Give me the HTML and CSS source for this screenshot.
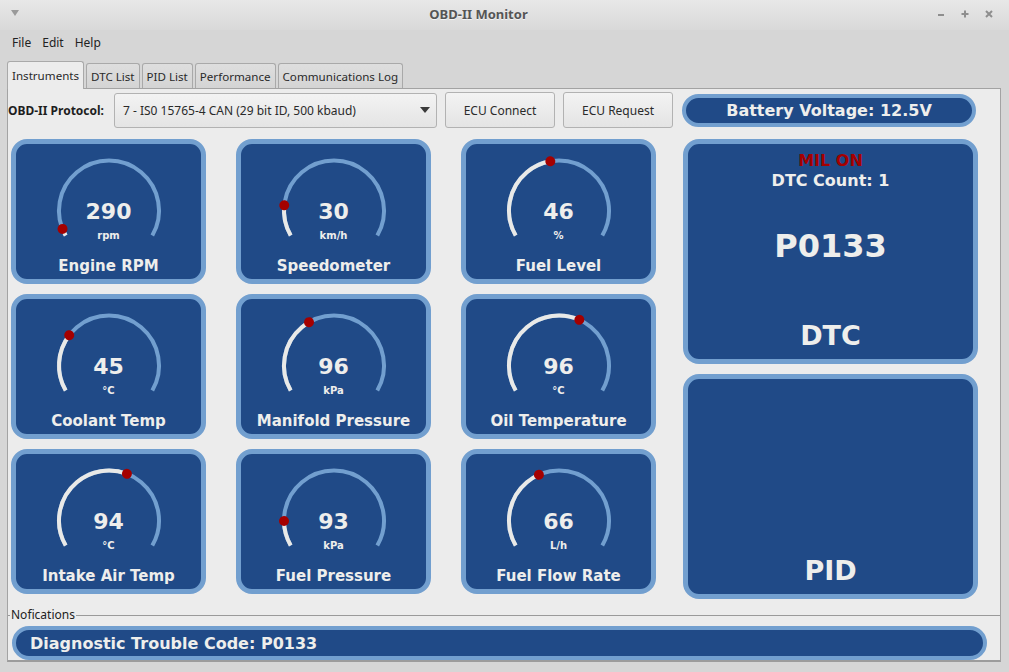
FILE: index.html
```html
<!DOCTYPE html>
<html>
<head>
<meta charset="utf-8">
<title>OBD-II Monitor</title>
<link rel="stylesheet" href="styles.css">
</head>
<body>
<div class="window">
  <header class="titlebar">
    <div class="tb-left">
      <svg width="8" height="6" viewBox="0 0 8 6"><polygon points="0,0 8,0 4,6" class="tb-glyph-fill"/></svg>
    </div>
    <div class="tb-title">OBD-II Monitor</div>
    <div class="tb-right">
      <span class="tb-btn"><svg width="8" height="8" viewBox="0 0 8 8"><path d="M1 5h6" class="tb-glyph"/></svg></span>
      <span class="tb-btn"><svg width="8" height="8" viewBox="0 0 8 8"><path d="M0.5 4h7M4 0.5v7" class="tb-glyph"/></svg></span>
      <span class="tb-btn"><svg width="8" height="8" viewBox="0 0 8 8"><path d="M1 1l6 6M7 1l-6 6" class="tb-glyph"/></svg></span>
    </div>
  </header>

  <nav class="menubar">
    <span class="menu-item">File</span>
    <span class="menu-item">Edit</span>
    <span class="menu-item">Help</span>
  </nav>

  <div class="tabs">
    <div class="tab active">Instruments</div>
    <div class="tab">DTC List</div>
    <div class="tab">PID List</div>
    <div class="tab">Performance</div>
    <div class="tab">Communications Log</div>
  </div>

  <main class="pane">
    <div class="toolbar">
      <label class="proto-label">OBD-II Protocol:</label>
      <div class="combo">
        <span class="combo-text">7 - IS0 15765-4 CAN (29 bit ID, 500 kbaud)</span>
        <svg class="combo-arrow" width="10" height="6" viewBox="0 0 10 6"><polygon points="0,0 10,0 5,6"/></svg>
      </div>
      <button class="btn">ECU Connect</button>
      <button class="btn">ECU Request</button>
      <div class="pill battery">Battery Voltage: 12.5V</div>
    </div>

    <div class="dashboard">
      <div class="gauges">
        <div class="card gauge">
          <div class="dial">
            <svg class="dial-svg" width="110" height="90" viewBox="0 0 110 90">
              <path class="arc-bg" d="M11.70 83.5 A50 50 0 1 1 98.30 83.5"/>
              <path class="arc-val" d="M11.70 83.5 A50 50 0 1 1 98.30 83.5" pathLength="240" stroke-dasharray="8.4 300"/>
              <circle class="needle" cx="55" cy="8.5" r="5" transform="rotate(-111.6 55 58.5)"/>
            </svg>
            <div class="value">290</div>
            <div class="unit">rpm</div>
          </div>
          <div class="gauge-label">Engine RPM</div>
        </div>

        <div class="card gauge">
          <div class="dial">
            <svg class="dial-svg" width="110" height="90" viewBox="0 0 110 90">
              <path class="arc-bg" d="M11.70 83.5 A50 50 0 1 1 98.30 83.5"/>
              <path class="arc-val" d="M11.70 83.5 A50 50 0 1 1 98.30 83.5" pathLength="240" stroke-dasharray="36 300"/>
              <circle class="needle" cx="55" cy="8.5" r="5" transform="rotate(-84 55 58.5)"/>
            </svg>
            <div class="value">30</div>
            <div class="unit">km/h</div>
          </div>
          <div class="gauge-label">Speedometer</div>
        </div>

        <div class="card gauge">
          <div class="dial">
            <svg class="dial-svg" width="110" height="90" viewBox="0 0 110 90">
              <path class="arc-bg" d="M11.70 83.5 A50 50 0 1 1 98.30 83.5"/>
              <path class="arc-val" d="M11.70 83.5 A50 50 0 1 1 98.30 83.5" pathLength="240" stroke-dasharray="110 300"/>
              <circle class="needle" cx="55" cy="8.5" r="5" transform="rotate(-10 55 58.5)"/>
            </svg>
            <div class="value">46</div>
            <div class="unit">%</div>
          </div>
          <div class="gauge-label">Fuel Level</div>
        </div>

        <div class="card gauge">
          <div class="dial">
            <svg class="dial-svg" width="110" height="90" viewBox="0 0 110 90">
              <path class="arc-bg" d="M11.70 83.5 A50 50 0 1 1 98.30 83.5"/>
              <path class="arc-val" d="M11.70 83.5 A50 50 0 1 1 98.30 83.5" pathLength="240" stroke-dasharray="67.3 300"/>
              <circle class="needle" cx="55" cy="8.5" r="5" transform="rotate(-52.7 55 58.5)"/>
            </svg>
            <div class="value">45</div>
            <div class="unit">°C</div>
          </div>
          <div class="gauge-label">Coolant Temp</div>
        </div>

        <div class="card gauge">
          <div class="dial">
            <svg class="dial-svg" width="110" height="90" viewBox="0 0 110 90">
              <path class="arc-bg" d="M11.70 83.5 A50 50 0 1 1 98.30 83.5"/>
              <path class="arc-val" d="M11.70 83.5 A50 50 0 1 1 98.30 83.5" pathLength="240" stroke-dasharray="90 300"/>
              <circle class="needle" cx="55" cy="8.5" r="5" transform="rotate(-30 55 58.5)"/>
            </svg>
            <div class="value">96</div>
            <div class="unit">kPa</div>
          </div>
          <div class="gauge-label">Manifold Pressure</div>
        </div>

        <div class="card gauge">
          <div class="dial">
            <svg class="dial-svg" width="110" height="90" viewBox="0 0 110 90">
              <path class="arc-bg" d="M11.70 83.5 A50 50 0 1 1 98.30 83.5"/>
              <path class="arc-val" d="M11.70 83.5 A50 50 0 1 1 98.30 83.5" pathLength="240" stroke-dasharray="144 300"/>
              <circle class="needle" cx="55" cy="8.5" r="5" transform="rotate(24 55 58.5)"/>
            </svg>
            <div class="value">96</div>
            <div class="unit">°C</div>
          </div>
          <div class="gauge-label">Oil Temperature</div>
        </div>

        <div class="card gauge">
          <div class="dial">
            <svg class="dial-svg" width="110" height="90" viewBox="0 0 110 90">
              <path class="arc-bg" d="M11.70 83.5 A50 50 0 1 1 98.30 83.5"/>
              <path class="arc-val" d="M11.70 83.5 A50 50 0 1 1 98.30 83.5" pathLength="240" stroke-dasharray="141 300"/>
              <circle class="needle" cx="55" cy="8.5" r="5" transform="rotate(21 55 58.5)"/>
            </svg>
            <div class="value">94</div>
            <div class="unit">°C</div>
          </div>
          <div class="gauge-label">Intake Air Temp</div>
        </div>

        <div class="card gauge">
          <div class="dial">
            <svg class="dial-svg" width="110" height="90" viewBox="0 0 110 90">
              <path class="arc-bg" d="M11.70 83.5 A50 50 0 1 1 98.30 83.5"/>
              <path class="arc-val" d="M11.70 83.5 A50 50 0 1 1 98.30 83.5" pathLength="240" stroke-dasharray="29.4 300"/>
              <circle class="needle" cx="55" cy="8.5" r="5" transform="rotate(-90.6 55 58.5)"/>
            </svg>
            <div class="value">93</div>
            <div class="unit">kPa</div>
          </div>
          <div class="gauge-label">Fuel Pressure</div>
        </div>

        <div class="card gauge">
          <div class="dial">
            <svg class="dial-svg" width="110" height="90" viewBox="0 0 110 90">
              <path class="arc-bg" d="M11.70 83.5 A50 50 0 1 1 98.30 83.5"/>
              <path class="arc-val" d="M11.70 83.5 A50 50 0 1 1 98.30 83.5" pathLength="240" stroke-dasharray="96.3 300"/>
              <circle class="needle" cx="55" cy="8.5" r="5" transform="rotate(-23.7 55 58.5)"/>
            </svg>
            <div class="value">66</div>
            <div class="unit">L/h</div>
          </div>
          <div class="gauge-label">Fuel Flow Rate</div>
        </div>
      </div>

      <div class="side">
        <div class="card panel">
          <div class="mil">MIL ON</div>
          <div class="dtc-count">DTC Count: 1</div>
          <div class="dtc-code">P0133</div>
          <div class="panel-label">DTC</div>
        </div>
        <div class="card panel">
          <div class="panel-label">PID</div>
        </div>
      </div>
    </div>

    <div class="group-title"><span class="group-text">Nofications</span></div>
    <div class="pill notify">Diagnostic Trouble Code: P0133</div>
  </main>
</div>
</body>
</html>
```

FILE: styles.css
```css
html, body {
  margin: 0;
  padding: 0;
}

body {
  width: 1009px;
  height: 672px;
  overflow: hidden;
  background: #d6d6d6;
  font-family: "Noto Sans", "DejaVu Sans", sans-serif;
  font-size: 12px;
  color: #2e2e2e;
}

.window {
  width: 1009px;
  height: 672px;
  display: flex;
  flex-direction: column;
}

/* ---------- title bar ---------- */
.titlebar {
  height: 30px;
  display: grid;
  grid-template-columns: 28px 1fr 80px;
  align-items: center;
  background: linear-gradient(#e8e8e8, #d9d9d9);
}

.tb-left {
  display: flex;
  align-items: center;
  padding-left: 11px;
  padding-bottom: 4px;
}

.tb-glyph-fill {
  fill: #9a9a9a;
}

.tb-title {
  text-align: center;
  font-weight: bold;
  font-size: 13px;
  color: #555555;
  text-shadow: 0 1px 0 #f2f2f2;
  padding-bottom: 2px;
}

.tb-right {
  display: flex;
  align-items: center;
  padding-bottom: 2px;
}

.tb-btn {
  width: 24px;
  display: flex;
  justify-content: center;
}

.tb-glyph {
  stroke: #8e8e8e;
  stroke-width: 2;
  fill: none;
}

/* ---------- menu ---------- */
.menubar {
  height: 25px;
  display: flex;
  align-items: center;
  padding-left: 7px;
  color: #222;
}

.menu-item {
  padding: 0 5px;
}

.menu-item + .menu-item {
  margin-left: 1px;
}

/* ---------- tabs ---------- */
.tabs {
  height: 33px;
  display: flex;
  align-items: flex-end;
  padding-left: 7px;
  gap: 2px;
}

.tab {
  box-sizing: border-box;
  height: 25px;
  padding: 0 4px;
  display: flex;
  align-items: center;
  border: 1px solid #a9a9a9;
  border-bottom: none;
  border-radius: 3px 3px 0 0;
  background: linear-gradient(#dedede, #d4d4d4);
  color: #2a2a2a;
  font-size: 11.6px;
}

.tab.active {
  height: 28px;
  margin-bottom: -1px;
  background: #ececec;
  position: relative;
  z-index: 1;
}

/* ---------- pane ---------- */
.pane {
  box-sizing: border-box;
  width: 994px;
  height: 574px;
  margin-left: 7px;
  border: 1px solid #a3a3a3;
  border-bottom: 2px solid #9c9c9c;
  background: #ececec;
  display: flex;
  flex-direction: column;
}

.toolbar {
  height: 36px;
  margin-top: 3px;
  display: flex;
  align-items: center;
}

.proto-label {
  width: 106px;
  font-weight: bold;
  color: #1e1e1e;
}

.combo {
  box-sizing: border-box;
  width: 323px;
  height: 35px;
  display: flex;
  align-items: center;
  justify-content: space-between;
  padding: 0 6px 0 8px;
  border: 1px solid #b2b2b2;
  border-radius: 3px;
  background: linear-gradient(#f3f3f3, #e4e4e4);
  color: #2a2a2a;
}

.combo-arrow polygon {
  fill: #3a3a3a;
}

.btn {
  box-sizing: border-box;
  width: 110px;
  height: 36px;
  margin-left: 8px;
  border: 1px solid #b2b2b2;
  border-radius: 3px;
  background: linear-gradient(#f3f3f3, #e4e4e4);
  font-family: "Noto Sans", sans-serif;
  font-size: 12px;
  color: #2a2a2a;
  padding: 0;
}

.pill {
  box-sizing: border-box;
  border: 4px solid #729fcf;
  border-radius: 18px;
  background: #204a87;
  color: #eeeeec;
  font-family: "DejaVu Sans", sans-serif;
  font-weight: bold;
  font-size: 16px;
  display: flex;
  align-items: center;
}

.battery {
  width: 294px;
  height: 33px;
  margin-left: 9px;
  justify-content: center;
}

/* ---------- dashboard ---------- */
.dashboard {
  margin-top: 11px;
  padding-left: 3px;
  display: flex;
  align-items: flex-start;
}

.gauges {
  display: grid;
  grid-template-columns: repeat(3, 195px);
  grid-auto-rows: 145px;
  gap: 10px 30px;
}

.card {
  box-sizing: border-box;
  border: 5px solid #729fcf;
  border-radius: 16px;
  background: #204a87;
  color: #eeeeec;
  font-family: "DejaVu Sans", sans-serif;
  font-weight: bold;
}

.gauge {
  display: flex;
  flex-direction: column;
  align-items: center;
}

.dial {
  position: relative;
  width: 110px;
  height: 90px;
  margin-top: 8px;
  display: flex;
  flex-direction: column;
  align-items: center;
}

.dial-svg {
  position: absolute;
  left: 0;
  top: 0;
  overflow: visible;
}

.arc-bg {
  fill: none;
  stroke: #729fcf;
  stroke-width: 4;
}

.arc-val {
  fill: none;
  stroke: #e9e9e7;
  stroke-width: 4;
}

.needle {
  fill: #a40000;
}

.value {
  position: relative;
  margin-top: 49px;
  font-size: 22px;
  line-height: 22px;
}

.unit {
  position: relative;
  margin-top: 7px;
  font-size: 10px;
  line-height: 12px;
}

.gauge-label {
  margin-top: 15px;
  font-size: 15px;
  line-height: 18px;
}

.side {
  width: 295px;
  margin-left: 27px;
  display: flex;
  flex-direction: column;
  gap: 10px;
}

.panel {
  height: 225px;
  display: flex;
  flex-direction: column;
  align-items: center;
  padding-top: 7px;
  padding-bottom: 8px;
}

.mil {
  color: #a40000;
  font-size: 16px;
  line-height: 20px;
}

.dtc-count {
  font-size: 16px;
  line-height: 20px;
}

.dtc-code {
  margin-top: 37px;
  font-size: 32px;
  line-height: 36px;
}

.panel-label {
  margin-top: auto;
  font-size: 27px;
  line-height: 30px;
}

/* ---------- notifications ---------- */
.group-title {
  height: 14px;
  margin-top: 9px;
  display: flex;
  align-items: center;
  color: #222;
}

.group-title::before {
  content: "";
  width: 2px;
  height: 1px;
  background: #9a9a9a;
}

.group-title::after {
  content: "";
  flex: 1;
  height: 1px;
  background: #9a9a9a;
}

.group-text {
  padding: 0 1px;
  font-size: 12px;
  line-height: 14px;
}

.notify {
  height: 34px;
  margin: 4px 13px 0 4px;
  padding-left: 14px;
}
```
